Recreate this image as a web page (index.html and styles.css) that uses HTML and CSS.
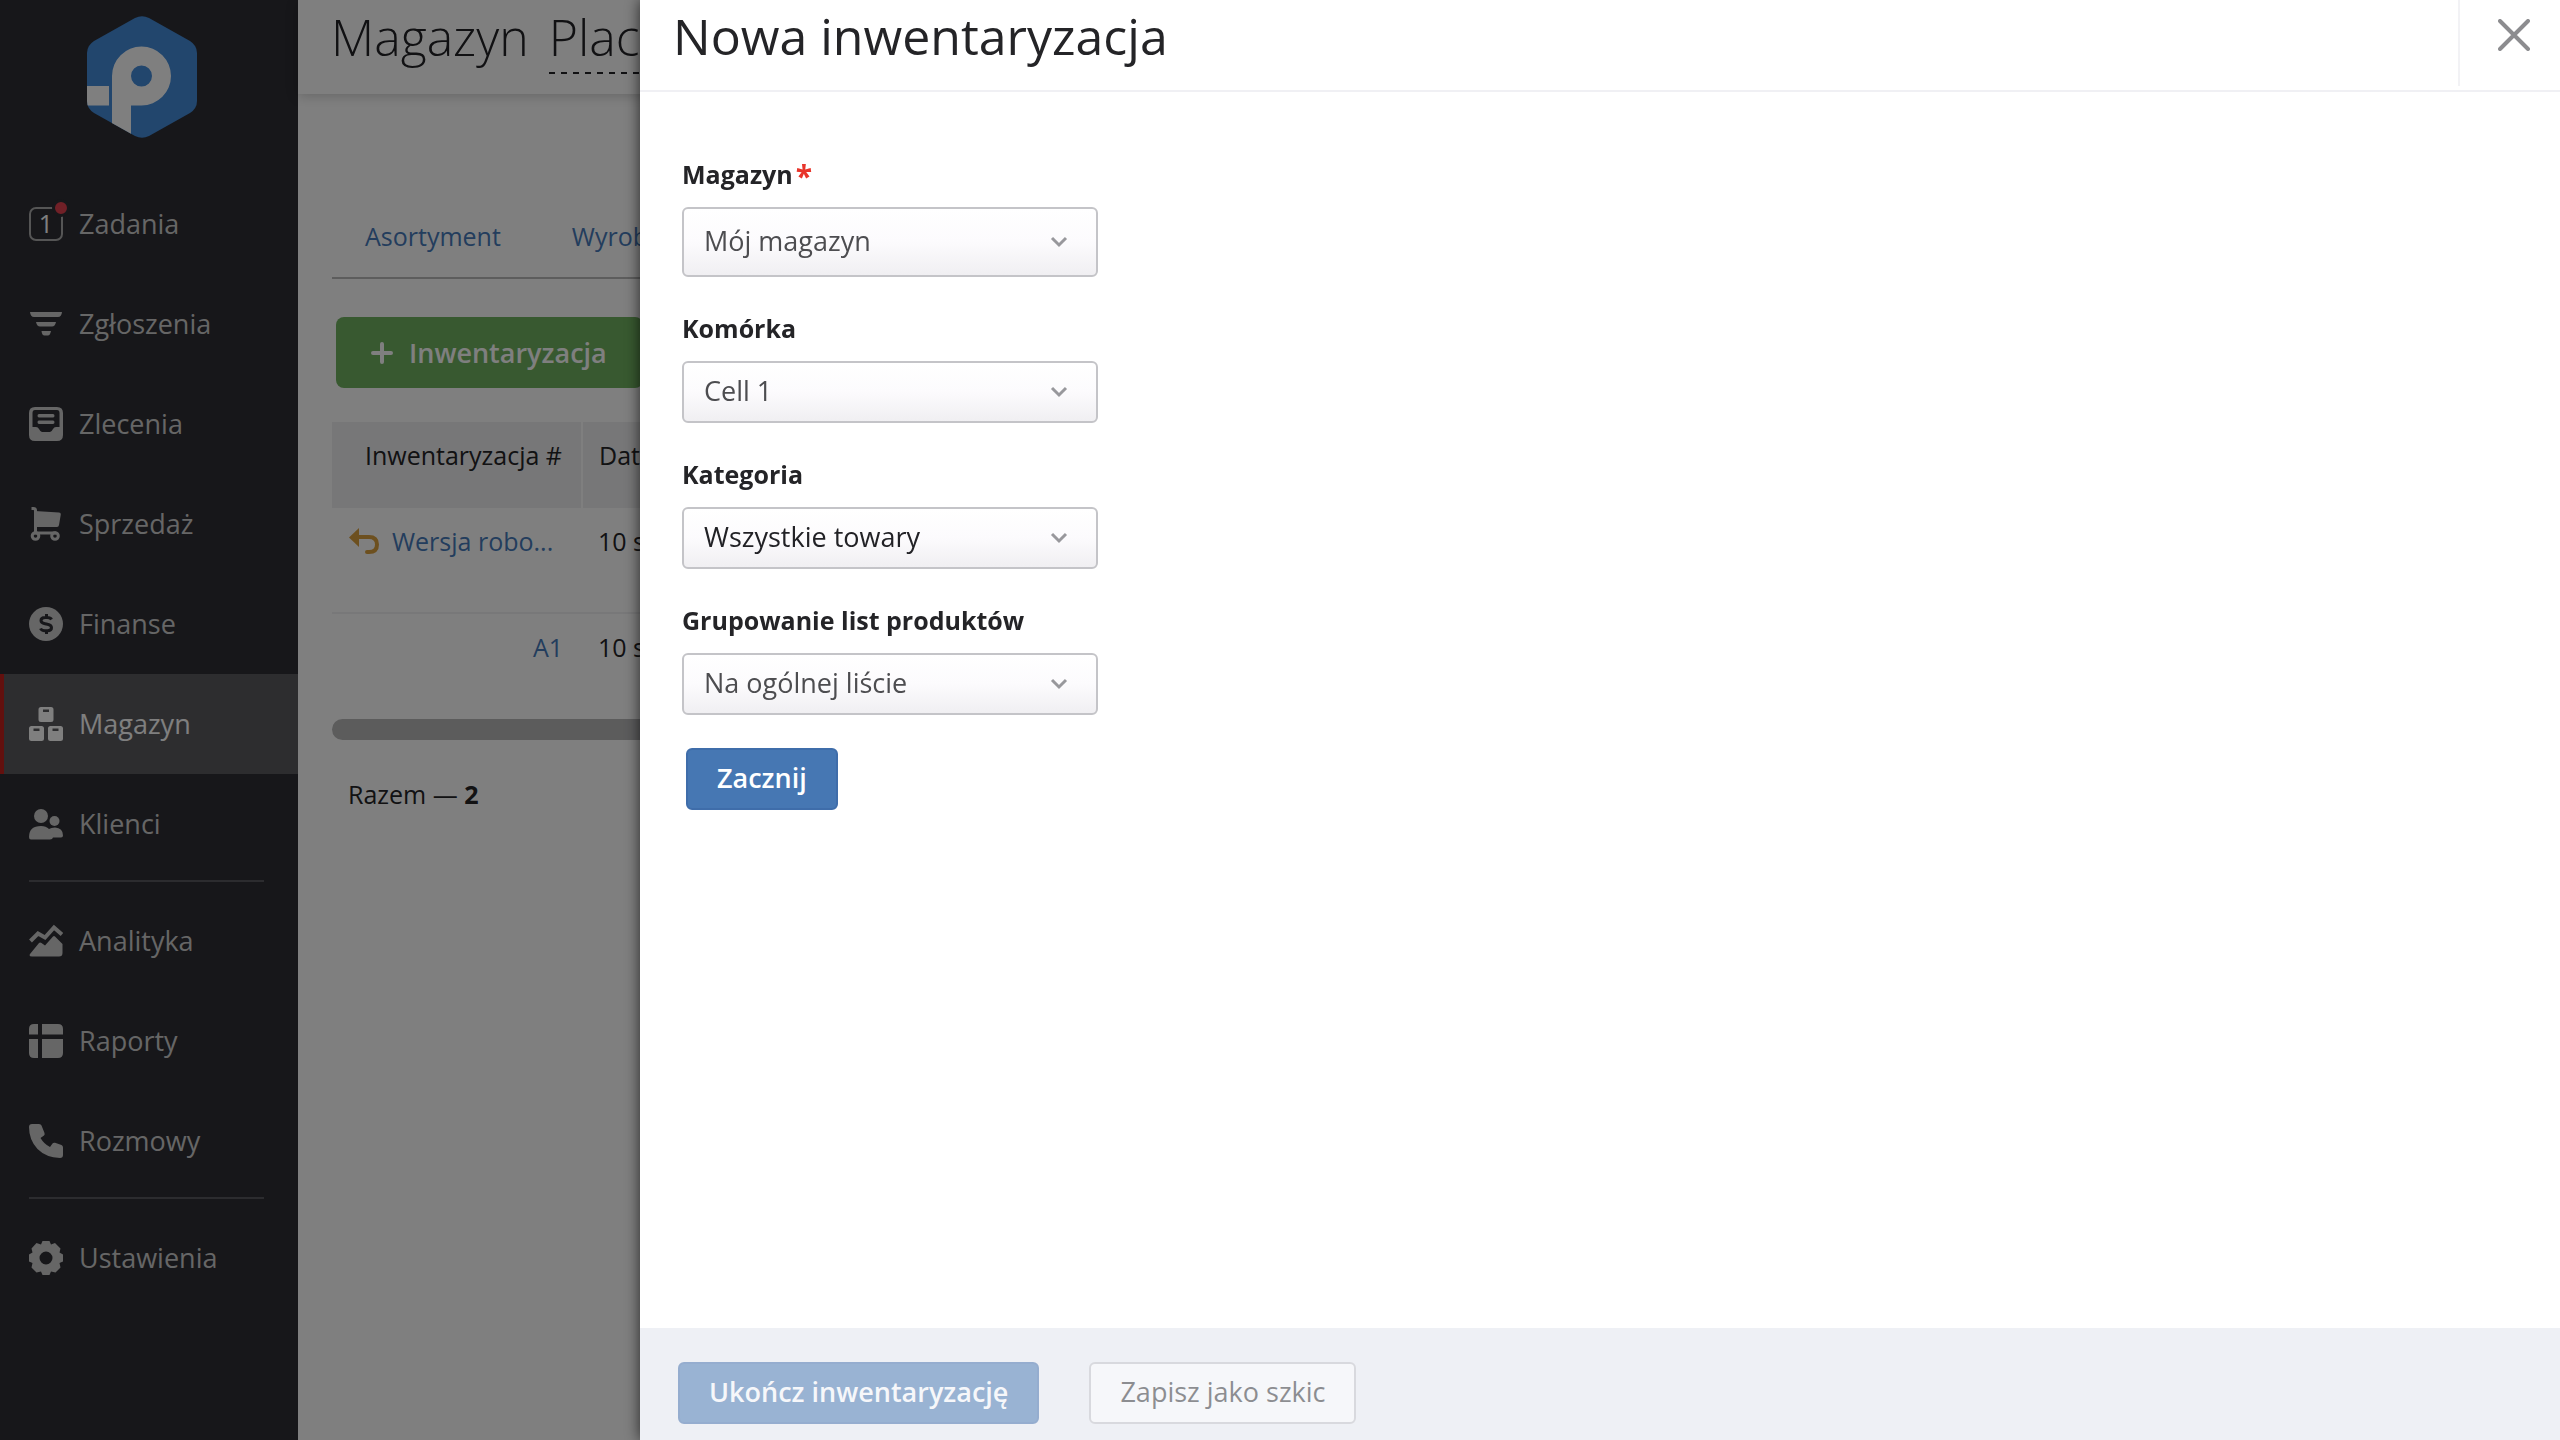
FILE: index.html
```html
<!DOCTYPE html>
<html lang="pl">
<head>
  <meta charset="UTF-8" />
  <meta name="viewport" content="width=device-width, initial-scale=1.0" />
  <title>Nowa inwentaryzacja</title>
  <link rel="stylesheet" href="styles.css">
</head>
<body>
  <div class="layout">
    <aside class="sidebar">
      <a class="logo" href="#" aria-label="Start">
        <svg width="110" height="122" viewBox="0 0 110 122">
          <defs>
            <clipPath id="hex">
              <path d="M48 2Q55 -1.500 62 2L103 25Q110 29.500 110 37V85Q110 92.500 103 97L62 120Q55 123.500 48 120L7 97Q0 92.500 0 85V37Q0 29.500 7 25Z" />
            </clipPath>
          </defs>
          <g clip-path="url(#hex)">
            <rect width="110" height="122" fill="#448cda" />
            <path fill="#fff" fill-rule="evenodd" d="M25 122V60A29.500 29.500 0 1 1 54.500 89.500H44V122ZM54.500 49.500A10.500 10.500 0 1 0 54.500 70.500A10.500 10.500 0 1 0 54.500 49.500Z" />
            <path fill="#fff" d="M0 70H22V89.500H0Z" />
          </g>
        </svg>
      </a>

      <nav class="menu">
        <a class="menu-item" href="#">
          <span class="task-icon">1<span class="task-dot"></span></span>
          Zadania
        </a>
        <a class="menu-item" href="#">
          <svg class="icon" viewBox="0 0 34 34"><path d="M1 5H33Q32.500 10 29 10H5Q1.500 10 1 5ZM7 15H27Q26 19.500 23 19.500H11Q8 19.500 7 15ZM12.500 24H22Q21 28.500 19 28.500H15.500Q13 28.500 12.500 24Z" /></svg>
          Zgłoszenia
        </a>
        <a class="menu-item" href="#">
          <svg class="icon" viewBox="0 0 34 34"><path fill-rule="evenodd" d="M6 0H28Q34 0 34 6V28Q34 34 28 34H6Q0 34 0 28V6Q0 0 6 0ZM6 3Q3.500 3 3.500 6V20H7Q9 20 10 22Q11.500 25 13 25H21Q22.500 25 24 22Q25 20 27 20H30.500V6Q30.500 3 28 3Z" /><path d="M10 7H24Q25.500 7 25.500 8.800T24 10.500H10Q8.500 10.500 8.500 8.800T10 7ZM10 13.500H24Q25.500 13.500 25.500 15.200T24 17H10Q8.500 17 8.500 15.200T10 13.500Z" /></svg>
          Zlecenia
        </a>
        <a class="menu-item" href="#">
          <svg class="icon" viewBox="0 0 34 34"><path d="M6 4L30 5.500Q32 5.600 31.800 7.500L30 18Q29.700 20 28 20H6Z" /><path class="line" d="M2.500 1.500H4.500Q6.500 1.500 6.500 3.500V26H27" /><circle class="line" cx="6.500" cy="29" r="3.300" /><circle class="line" cx="26" cy="29" r="3.300" /></svg>
          Sprzedaż
        </a>
        <a class="menu-item" href="#">
          <svg class="icon" viewBox="0 0 34 34"><circle cx="17" cy="17" r="17" /><path class="cut" d="M22.500 12.500Q21.500 10.500 18 10.500H16Q12 10.500 12 13.500Q12 16 16 16.700L18.500 17.300Q22.500 18 22.500 20.800Q22.500 23.700 18.500 23.700H16Q12.500 23.700 11.500 21.500M17.500 7V10.500M17.500 23.700V27" /></svg>
          Finanse
        </a>
        <a class="menu-item active" href="#" aria-current="page">
          <svg class="icon" viewBox="0 0 34 34"><path fill-rule="evenodd" d="M12 0H22Q24.500 0 24.500 2.500V12.500Q24.500 15 22 15H12Q9.500 15 9.500 12.500V2.500Q9.500 0 12 0ZM14 2.500V5H20V2.500ZM2.500 19H12.500Q15 19 15 21.500V31.500Q15 34 12.500 34H2.500Q0 34 0 31.500V21.500Q0 19 2.500 19ZM4.500 21.500V24H10.500V21.500ZM21.500 19H31.500Q34 19 34 21.500V31.500Q34 34 31.500 34H21.500Q19 34 19 31.500V21.500Q19 19 21.500 19ZM23.500 21.500V24H29.500V21.500Z" /></svg>
          Magazyn
        </a>
        <a class="menu-item" href="#">
          <svg class="icon" viewBox="0 0 34 34"><circle cx="12" cy="9" r="7" /><circle cx="25.500" cy="14" r="5" /><path d="M0 30Q0 19 12 19Q17 19 20 22Q22 20.500 26 20.500Q34 21 34 28.500Q34 30.500 32 30.500H24Q23.500 32.500 21 32.500H2Q0 32.500 0 30Z" /></svg>
          Klienci
        </a>
        <hr class="menu-line" />
        <a class="menu-item" href="#">
          <svg class="icon" viewBox="0 0 34 34"><path d="M1 30L10 19Q11 18 12.500 19L16 21.500L24 12.500Q25 11.500 26 12.500L33.500 20V29Q33.500 32.500 30 32.500H3Q-0.500 32.500 1 30Z" /><path class="line thick" d="M1.500 17L9 9.500L16 13.500L25 3.500L33 10.500" /></svg>
          Analityka
        </a>
        <a class="menu-item" href="#">
          <svg class="icon" viewBox="0 0 34 34"><path d="M5 0H9V10.500H0V5Q0 0 5 0ZM13 0H29Q34 0 34 5V10.500H13ZM0 15H9V34H5Q0 34 0 29ZM13 15H34V29Q34 34 29 34H13Z" /></svg>
          Raporty
        </a>
        <a class="menu-item" href="#">
          <svg class="icon" viewBox="0 0 34 34"><path d="M3 0H10Q12 0 12.500 1.500L15.500 9Q16 10.500 15 11.500L11.500 14Q15 20 21 23L23.500 19.500Q24.500 18.300 26 18.800L32.500 21Q34 21.500 34 23.500V31Q34 34 31 34Q17 33.500 8.500 25Q0 16 0 3Q0 0 3 0Z" /></svg>
          Rozmowy
        </a>
        <hr class="menu-line" />
        <a class="menu-item" href="#">
          <svg class="icon" viewBox="0 0 34 34"><path fill-rule="evenodd" d="M13.500 0H20.500L22 3.500L26 2L31.500 7.500L30.500 11.500L34 13.500V20.500L30.500 22L31.500 26.500L26.500 31.500L22 30.500L20.500 34H13.500L12 30.500L7.500 31.500L2.500 26.500L3.500 22L0 20.500V13.500L3.500 11.500L2.500 7.500L7.500 2L12 3.500ZM17 10.500A6.500 6.500 0 1 0 17 23.500A6.500 6.500 0 1 0 17 10.500Z" /></svg>
          Ustawienia
        </a>
      </nav>
    </aside>

    <main class="page">
      <header class="page-header">
        <h1 class="page-title">Magazyn</h1>
        <a class="page-place" href="#">Place</a>
      </header>

      <div class="page-content">
        <nav class="tabs">
          <a href="#">Asortyment</a>
          <a href="#">Wyroby</a>
        </nav>

        <button class="btn-add" type="button">
          <svg width="22" height="22" viewBox="0 0 22 22"><path d="M11 2V20M2 11H20" /></svg>
          Inwentaryzacja
        </button>

        <table class="list">
          <thead>
            <tr>
              <th class="col-name">Inwentaryzacja #</th>
              <th>Data</th>
            </tr>
          </thead>
          <tbody>
            <tr>
              <td class="col-name">
                <a class="draft" href="#">
                  <svg width="30" height="26" viewBox="0 0 30 26"><path class="head" d="M0 9.500L10 0V19Z" /><path class="tail" d="M9 9H20Q28 9 28 16.500T20 24H18" /></svg>
                  Wersja robo...
                </a>
              </td>
              <td>10 sie</td>
            </tr>
            <tr>
              <td class="col-name"><a href="#">A1</a></td>
              <td>10 sie</td>
            </tr>
          </tbody>
        </table>
        <div class="scrollbar"></div>
        <p class="total">Razem — <b>2</b></p>
      </div>
    </main>
  </div>

  <div class="overlay"></div>

  <section class="drawer" role="dialog" aria-labelledby="drawer-title">
    <header class="drawer-header">
      <h2 class="drawer-title" id="drawer-title">Nowa inwentaryzacja</h2>
      <button class="close" type="button" aria-label="Zamknij">
        <svg width="32" height="32" viewBox="0 0 32 32"><path d="M2 2L30 30M30 2L2 30" /></svg>
      </button>
    </header>

    <form class="drawer-body">
      <div class="field">
        <label for="magazyn">Magazyn<span class="required">*</span></label>
        <div class="select tall">
          <select id="magazyn">
            <option>Mój magazyn</option>
          </select>
          <svg class="arrow" width="18" height="12" viewBox="0 0 18 12"><path d="M2 2L9 9L16 2" /></svg>
        </div>
      </div>

      <div class="field">
        <label for="komorka">Komórka</label>
        <div class="select">
          <select id="komorka">
            <option>Cell 1</option>
          </select>
          <svg class="arrow" width="18" height="12" viewBox="0 0 18 12"><path d="M2 2L9 9L16 2" /></svg>
        </div>
      </div>

      <div class="field">
        <label for="kategoria">Kategoria</label>
        <div class="select dark">
          <select id="kategoria">
            <option>Wszystkie towary</option>
          </select>
          <svg class="arrow" width="18" height="12" viewBox="0 0 18 12"><path d="M2 2L9 9L16 2" /></svg>
        </div>
      </div>

      <div class="field">
        <label for="grupowanie">Grupowanie list produktów</label>
        <div class="select">
          <select id="grupowanie">
            <option>Na ogólnej liście</option>
          </select>
          <svg class="arrow" width="18" height="12" viewBox="0 0 18 12"><path d="M2 2L9 9L16 2" /></svg>
        </div>
      </div>

      <button class="btn btn-start" type="button">Zacznij</button>
    </form>

    <footer class="drawer-footer">
      <button class="btn" type="button" disabled>Ukończ inwentaryzację</button>
      <button class="btn btn-light" type="button" disabled>Zapisz jako szkic</button>
    </footer>
  </section>
</body>
</html>
```

FILE: styles.css
```css
* {
  box-sizing: border-box;
}
body {
  margin: 0;
  font-family: "Open Sans", "Noto Sans", sans-serif;
  font-size: 25px;
  line-height: 36px;
  color: #242427;
  overflow: hidden;
}
a {
  color: #477bbb;
  text-decoration: none;
}
button, select {
  font-family: inherit;
  cursor: pointer;
}
.layout {
  display: flex;
  min-height: 100vh;
}

/* sidebar */
.sidebar {
  width: 298px;
  flex-shrink: 0;
  background: #2e2e34;
}
.logo {
  display: flex;
  justify-content: center;
  padding: 16px 14px 36px 0;
}
.menu-item {
  display: flex;
  align-items: center;
  gap: 16px;
  height: 100px;
  padding-left: 29px;
  font-size: 27px;
  color: #ccc;
}
.menu-item.active {
  padding-left: 25px;
  border-left: 4px solid #c4201c;
  background: #5a5a5f;
  color: #fff;
}
.menu-line {
  height: 2px;
  margin: 6px 34px 9px 29px;
  border: 0;
  background: #58585e;
}
.icon {
  width: 34px;
  height: 34px;
  fill: currentColor;
}
.icon .line {
  fill: none;
  stroke: currentColor;
  stroke-width: 3;
}
.icon .thick {
  stroke-width: 4;
}
.icon .cut {
  fill: none;
  stroke: #2e2e34;
  stroke-width: 3;
}
.task-icon {
  position: relative;
  width: 34px;
  height: 34px;
  border: 2px solid #aaa;
  border-radius: 7px;
  font-size: 25px;
  font-weight: 500;
  line-height: 28px;
  text-align: center;
  color: #fff;
}
.task-dot {
  position: absolute;
  top: -10px;
  right: -9px;
  width: 18px;
  height: 18px;
  border: 3px solid #2e2e34;
  border-radius: 50%;
  background: #e2404e;
}

/* page */
.page {
  flex: 1;
  background: #fff;
}
.page-header {
  display: flex;
  gap: 20px;
  height: 94px;
  padding-left: 33px;
  box-shadow: 0 2px 12px rgba(0, 0, 0, 0.2);
}
.page-title, .page-place {
  margin: 0;
  font-size: 50px;
  font-weight: 300;
  line-height: 74px;
  color: #222226;
}
.page-place {
  height: 74px;
  background: repeating-linear-gradient(90deg, #222226 0 6px, transparent 6px 12px) left bottom / 100% 2px no-repeat;
}
.page-content {
  padding: 108px 34px 0;
}
.tabs {
  display: flex;
  gap: 71px;
  padding: 16px 33px 23px;
  border-bottom: 2px solid #bbb;
}
.btn-add {
  display: flex;
  align-items: center;
  gap: 16px;
  height: 71px;
  margin: 38px 0 34px 4px;
  padding: 0 36px 0 35px;
  border: 0;
  border-radius: 8px;
  background: #70b360;
  color: #fff;
  font-size: 27px;
  font-weight: 550;
}
.btn-add path {
  stroke: #fff;
  stroke-width: 4;
  stroke-linecap: round;
}
.list {
  width: 100%;
  border-collapse: collapse;
}
.list th {
  height: 86px;
  padding: 15px 16px;
  background: #efeff0;
  font-weight: 400;
  text-align: left;
  vertical-align: top;
}
.list td {
  height: 105px;
  padding: 15px 16px;
  text-align: left;
  vertical-align: top;
}
.list tr + tr td {
  border-top: 2px solid #f0f0f2;
}
.list .col-name {
  width: 250px;
  padding-right: 19px;
  padding-left: 17px;
  white-space: nowrap;
  text-align: right;
}
.list th.col-name {
  border-right: 2px solid #fff;
}
.draft {
  display: flex;
  align-items: center;
  gap: 13px;
}
.draft .head {
  fill: #dba03f;
}
.draft .tail {
  fill: none;
  stroke: #dba03f;
  stroke-width: 4;
  stroke-linecap: round;
}
.scrollbar {
  height: 21px;
  margin-top: 1px;
  border-radius: 11px;
  background: #b8b8b9;
}
.total {
  margin: 36px 16px 0;
}

.overlay {
  position: fixed;
  inset: 0;
  background: rgba(0, 0, 0, 0.5);
}

/* drawer */
.drawer {
  position: fixed;
  inset: 0 0 0 25%;
  display: flex;
  flex-direction: column;
  background: #fff;
  box-shadow: 0 0 14px rgba(0, 0, 0, 0.7);
}
.drawer-header {
  display: flex;
  justify-content: space-between;
  align-items: flex-start;
  height: 92px;
  padding-left: 33px;
  border-bottom: 2px solid #f0f0f4;
}
.drawer-title {
  margin: 0;
  font-size: 50px;
  font-weight: 400;
  line-height: 72px;
}
.close {
  width: 102px;
  height: 86px;
  padding: 0 0 12px 8px;
  border: 0;
  border-left: 2px solid #f2f2f5;
  background: none;
}
.close path {
  stroke: #8c8c8f;
  stroke-width: 4;
  stroke-linecap: round;
}
.drawer-body {
  flex: 1;
  padding: 64px 42px;
}
.field {
  display: flex;
  flex-direction: column;
  gap: 15px;
  width: 416px;
  margin-bottom: 33px;
}
.field label {
  font-weight: 700;
}
.required {
  margin-left: 3px;
  font-size: 30px;
  line-height: 1px;
  vertical-align: -3px;
  color: #e8352b;
}
.select {
  display: grid;
  align-items: center;
}
.select select, .select .arrow {
  grid-area: 1 / 1;
}
.select select {
  height: 62px;
  padding: 0 60px 3px 20px;
  border: 2px solid #c4c4c8;
  border-radius: 6px;
  background: linear-gradient(#fff, #fcfbfd 50%, #f0eff2);
  color: #4d4d50;
  font-size: 27px;
  appearance: none;
}
.select.tall select {
  height: 70px;
}
.select.dark select {
  color: #222226;
}
.select .arrow {
  justify-self: end;
  margin-right: 30px;
  pointer-events: none;
}
.arrow path {
  fill: none;
  stroke: #98989c;
  stroke-width: 3;
}
.btn {
  height: 62px;
  padding: 0 29px 3px;
  border: 2px solid #3f6daa;
  border-radius: 6px;
  background: #4677b3;
  color: #fff;
  font-size: 27px;
  font-weight: 550;
}
.btn-start {
  margin-left: 4px;
}
.btn-light {
  border-color: #c4c4c8;
  background: #fff;
  color: #2d2d30;
  font-weight: 400;
}
.btn:disabled {
  opacity: 0.5;
}
.drawer-footer {
  display: flex;
  gap: 50px;
  height: 112px;
  padding: 34px 38px 0;
  background: #eef0f5;
}
```
